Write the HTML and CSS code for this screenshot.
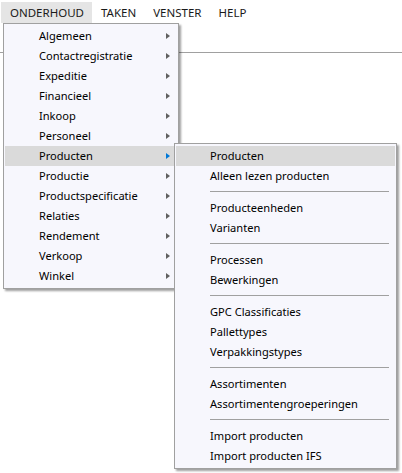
FILE: index.html
```html
<!DOCTYPE html>
<html lang="nl">
<head>
<meta charset="utf-8">
<title>Menu</title>
<link rel="stylesheet" href="styles.css">
</head>
<body>
<div class="app">
  <div class="menubar">
    <div class="mb-item active">ONDERHOUD</div>
    <div class="mb-item">TAKEN</div>
    <div class="mb-item">VENSTER</div>
    <div class="mb-item">HELP</div>
  </div>
  <div class="toolbar"></div>

  <div class="menu main-menu">
    <div class="item"><span>Algemeen</span><i class="arrow"></i></div>
    <div class="item"><span>Contactregistratie</span><i class="arrow"></i></div>
    <div class="item"><span>Expeditie</span><i class="arrow"></i></div>
    <div class="item"><span>Financieel</span><i class="arrow"></i></div>
    <div class="item"><span>Inkoop</span><i class="arrow"></i></div>
    <div class="item"><span>Personeel</span><i class="arrow"></i></div>
    <div class="item hover"><span>Producten</span><i class="arrow blue"></i></div>
    <div class="item"><span>Productie</span><i class="arrow"></i></div>
    <div class="item"><span>Productspecificatie</span><i class="arrow"></i></div>
    <div class="item"><span>Relaties</span><i class="arrow"></i></div>
    <div class="item"><span>Rendement</span><i class="arrow"></i></div>
    <div class="item"><span>Verkoop</span><i class="arrow"></i></div>
    <div class="item"><span>Winkel</span><i class="arrow"></i></div>
  </div>

  <div class="menu sub-menu">
    <div class="item hover"><span>Producten</span></div>
    <div class="item"><span>Alleen lezen producten</span></div>
    <div class="sep"></div>
    <div class="item"><span>Producteenheden</span></div>
    <div class="item"><span>Varianten</span></div>
    <div class="sep"></div>
    <div class="item"><span>Processen</span></div>
    <div class="item"><span>Bewerkingen</span></div>
    <div class="sep"></div>
    <div class="item"><span>GPC Classificaties</span></div>
    <div class="item"><span>Pallettypes</span></div>
    <div class="item"><span>Verpakkingstypes</span></div>
    <div class="sep"></div>
    <div class="item"><span>Assortimenten</span></div>
    <div class="item"><span>Assortimentengroeperingen</span></div>
    <div class="sep"></div>
    <div class="item"><span>Import producten</span></div>
    <div class="item"><span>Import producten IFS</span></div>
  </div>
</div>
</body>
</html>
```
FILE: styles.css
```css
html, body {
  margin: 0;
  padding: 0;
  background: #ffffff;
}
body {
  font-family: "Noto Sans", "Open Sans", sans-serif;
  font-size: 11px;
  color: #000000;
}
.app {
  position: relative;
  width: 402px;
  height: 473px;
  overflow: hidden;
}
.menubar {
  display: flex;
  padding: 2px 0 0 1px;
  height: 21px;
}
.mb-item {
  padding: 0 8px 0 9px;
  line-height: 21px;
  font-size: 11.5px;
  color: #1a1a1a;
}
.mb-item.active {
  background: #e5e5e5;
}
.toolbar {
  height: 29px;
  border-bottom: 1px solid #a0a0a0;
}
.menu {
  position: absolute;
  background: #f7f7fd;
  border: 1px solid #a0a0a0;
  padding: 2px 1px;
  box-shadow: 2px 2px 2px rgba(0, 0, 0, 0.38);
}
.main-menu {
  left: 3px;
  top: 23px;
  width: 172px;
}
.sub-menu {
  left: 174px;
  top: 143px;
  width: 219px;
}
.item {
  position: relative;
  height: 20px;
  line-height: 20px;
  padding-left: 34px;
  white-space: nowrap;
  font-size: 11.1px;
}
.item.hover {
  background: #dadada;
}
.arrow {
  position: absolute;
  right: 7px;
  top: 7px;
  width: 0;
  height: 0;
  border-left: 4px solid #606060;
  border-top: 3.5px solid transparent;
  border-bottom: 3.5px solid transparent;
}
.arrow.blue {
  border-left-color: #0078d7;
}
.sep {
  height: 12px;
  display: flex;
  align-items: flex-start;
}
.sep::before {
  content: "";
  display: block;
  margin: 5px 6px 0 34px;
  height: 1px;
  flex: 1;
  background: #a0a0a0;
}
```
